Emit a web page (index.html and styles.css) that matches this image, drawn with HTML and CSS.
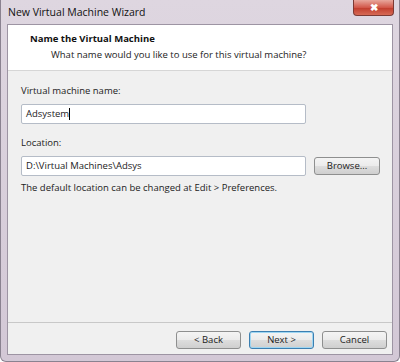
FILE: index.html
```html
<!DOCTYPE html>
<html lang="en">
<head>
    <meta charset="UTF-8">
    <title>New Virtual Machine Wizard</title>
    <link rel="stylesheet" href="styles.css">
</head>
<body>
    <div class="window">
        <div class="titlebar">
            <span class="title">New Virtual Machine Wizard</span>
            <span class="close">&#10006;</span>
        </div>
        <div class="client">
            <div class="header">
                <div class="heading">Name the Virtual Machine</div>
                <div class="subheading">What name would you like to use for this virtual machine?</div>
            </div>
            <div class="content">
                <div class="label">Virtual machine name:</div>
                <div class="field">Adsystem<span class="caret"></span></div>

                <div class="label label-second">Location:</div>
                <div class="row">
                    <div class="field">D:\Virtual Machines\Adsys</div>
                    <div class="btn btn-browse">Browse...</div>
                </div>
                <div class="hint">The default location can be changed at Edit &gt; Preferences.</div>
            </div>
            <div class="footer">
                <div class="btn">&lt; Back</div>
                <div class="btn btn-default">Next &gt;</div>
                <div class="btn">Cancel</div>
            </div>
        </div>
    </div>
</body>
</html>
```

FILE: styles.css
```css
body {
    margin: 0;
    background-color: #fff;
    font-family: "Open Sans", "Noto Sans", sans-serif;
    font-size: 9.5px;
    color: #222;
}

.window {
    width: 400px;
    height: 362px;
    box-sizing: border-box;
    display: flex;
    flex-direction: column;
    background: linear-gradient(#ded6e0, #d3c8d6);
    border-radius: 0 0 6px 6px;
    border: 1px solid #8a8290;
    border-top: none;
}

.titlebar {
    height: 24px;
    display: flex;
    align-items: flex-start;
    justify-content: space-between;
}

.title {
    padding: 5px 0 0 7px;
    font-size: 10.5px;
    color: #111;
}

.close {
    width: 41px;
    height: 16px;
    margin-right: 5px;
    border: 1px solid #7c3a34;
    border-top: none;
    border-radius: 0 0 4px 4px;
    background: linear-gradient(#e8a79c, #d2584a 50%, #c03b2c 51%, #d66a55);
    color: #fff;
    font-size: 10px;
    font-weight: bold;
    text-align: center;
    line-height: 15px;
    box-sizing: border-box;
}

.client {
    flex: 1;
    margin: 0 6px 6px 6px;
    border: 1px solid #9d94a3;
    background-color: #f0f0f0;
    display: flex;
    flex-direction: column;
}

.header {
    height: 46px;
    background-color: #fff;
    border-bottom: 1px solid #d6d6d6;
    padding: 6px 0 0 22px;
    box-sizing: border-box;
}

.heading {
    font-weight: bold;
    line-height: 16px;
    color: #111;
}

.subheading {
    padding-left: 21px;
    line-height: 16px;
    color: #222;
}

.content {
    flex: 1;
    padding: 12px 0 0 13px;
}

.label {
    line-height: 16px;
    margin-bottom: 5px;
}

.label-second {
    margin-top: 11px;
}

.field {
    width: 285px;
    height: 20px;
    box-sizing: border-box;
    border: 1px solid #b5bcc7;
    border-radius: 2px;
    background-color: #fff;
    padding: 0 4px;
    line-height: 18px;
}

.caret {
    display: inline-block;
    width: 1px;
    height: 12px;
    background-color: #000;
    vertical-align: middle;
}

.row {
    display: flex;
    align-items: center;
    gap: 8px;
}

.hint {
    margin-top: 5px;
    line-height: 14px;
}

.footer {
    height: 32px;
    box-sizing: border-box;
    border-top: 1px solid #c8c8c8;
    display: flex;
    justify-content: flex-end;
    align-items: flex-start;
    gap: 8px;
    padding: 8px 5px 0 0;
}

.btn {
    width: 65px;
    height: 18px;
    box-sizing: border-box;
    border: 1px solid #8e8f8f;
    border-radius: 3px;
    background: linear-gradient(#f4f4f4, #ebebeb 50%, #dddddd 51%, #cfcfcf);
    text-align: center;
    line-height: 16px;
    color: #222;
}

.btn-browse {
    width: 66px;
}

.btn-default {
    border-color: #3c7fb1;
    box-shadow: inset 0 0 0 1px #9fd6f2;
}
```
